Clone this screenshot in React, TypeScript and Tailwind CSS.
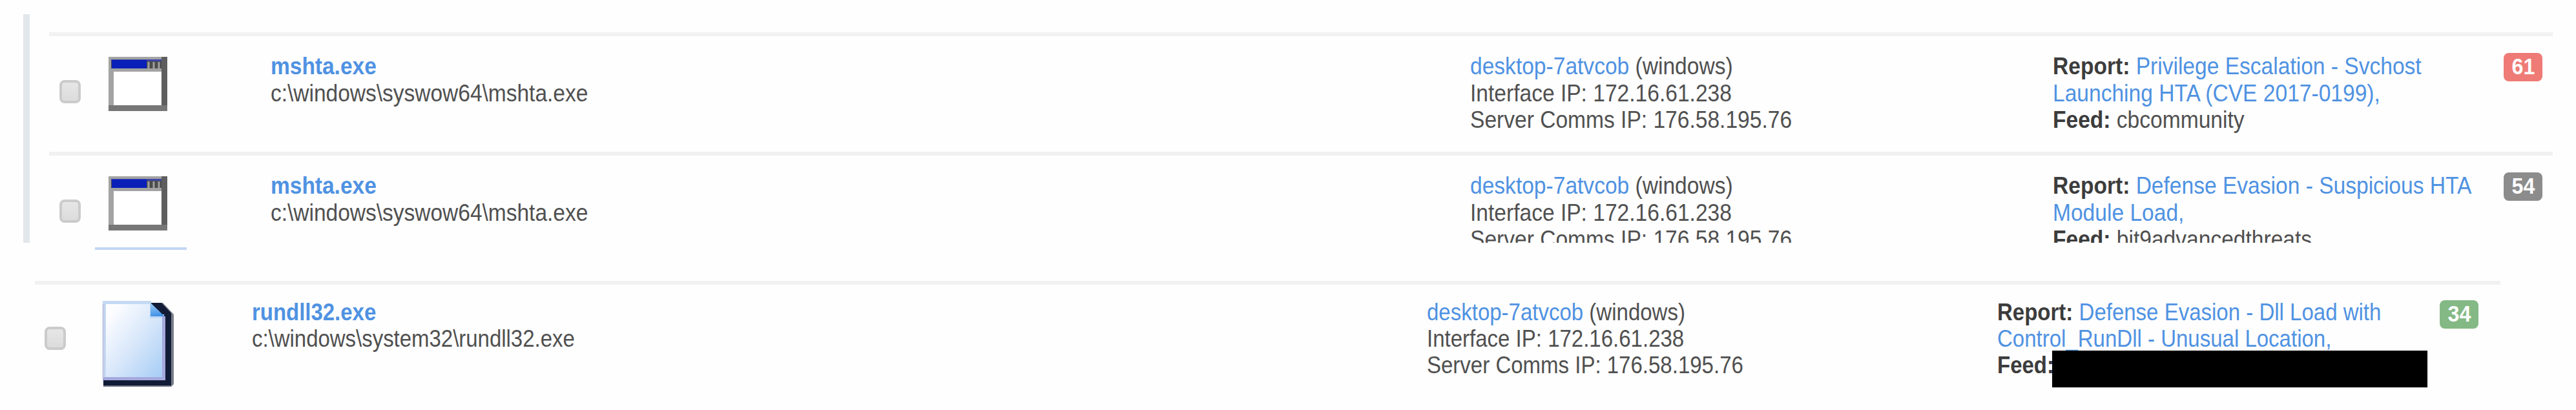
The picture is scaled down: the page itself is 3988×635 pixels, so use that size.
import type { ReactNode } from "react";

type Hit = {
  name: string;
  path: string;
  report: string[];
  feed: string;
  score: number;
};

const HITS: Hit[] = [
  {
    name: "mshta.exe",
    path: "c:\\windows\\syswow64\\mshta.exe",
    report: ["Privilege Escalation - Svchost", "Launching HTA (CVE 2017-0199),"],
    feed: "cbcommunity",
    score: 61,
  },
  {
    name: "mshta.exe",
    path: "c:\\windows\\syswow64\\mshta.exe",
    report: ["Defense Evasion - Suspicious HTA", "Module Load,"],
    feed: "bit9advancedthreats",
    score: 54,
  },
];

function scoreColor(score: number) {
  if (score > 60) return "bg-[#ee7b76]";
  if (score > 50) return "bg-[#8c8c8c]";
  return "bg-[#84b985]";
}

function Checkbox() {
  return (
    <span
      role="checkbox"
      aria-checked="false"
      className="block h-9 w-[33px] rounded-[8px] border-4 border-[#cbcbcb] bg-linear-to-b from-[#e6e6e6] to-[#dcdcdc]"
    />
  );
}

function WindowIcon() {
  return (
    <svg width="91" height="84" viewBox="0 0 91 84" aria-hidden="true">
      <rect width="91" height="84" fill="#a3a3a3" />
      <rect x="4" y="5" width="82" height="13" fill="#4b4b4b" />
      <rect x="4" y="4" width="82" height="3" fill="#3d45a8" />
      <rect x="5" y="5" width="54" height="13" fill="#0a1fb8" />
      <path d="M62 8v10M70 8v10M78 8v10" stroke="#a0a0a0" strokeWidth="3" />
      <rect x="82" y="0" width="9" height="84" fill="#5e5e5e" />
      <rect y="75" width="91" height="9" fill="#777" />
      <rect x="8" y="23" width="74" height="52" fill="#fff" />
    </svg>
  );
}

function FileIcon() {
  return (
    <svg width="112" height="136" viewBox="0 0 112 136" aria-hidden="true">
      <defs>
        <linearGradient id="page" x1="0" y1="0" x2="1" y2="1">
          <stop offset="0.1" stopColor="#fdfdff" />
          <stop offset="0.55" stopColor="#d6e6fa" />
          <stop offset="1" stopColor="#a6cdf5" />
        </linearGradient>
        <linearGradient id="fold" x1="0.3" y1="0" x2="0.5" y2="1">
          <stop offset="0" stopColor="#9dcbf5" />
          <stop offset="1" stopColor="#3d90e6" />
        </linearGradient>
      </defs>
      <path d="M2 124V134H107L111 130V22L94 4H78V20H98V124Z" fill="#777d89" />
      <path d="M2 123V132H107V20L92 4H76V22H96V123Z" fill="#121c36" />
      <path d="M1 1H76V25H97V123H1Z" fill="#c4d9f3" />
      <path d="M93 25H98V124H1V119H93Z" fill="#a5a9dc" />
      <path d="M6 6H74V28H93V119H6Z" fill="url(#page)" />
      <path d="M75 4L97 25H75Z" fill="url(#fold)" />
      <path d="M2 6V120" stroke="#c2c9e4" strokeWidth="3" />
    </svg>
  );
}

function Badge({ score }: { score: number }) {
  return (
    <span
      className={`flex h-[44px] w-[60px] items-center justify-center rounded-[8px] pb-1 text-[35px] leading-none font-bold text-white ${scoreColor(score)}`}
    >
      <span className="origin-center scale-x-[0.92]">{score}</span>
    </span>
  );
}

function Link({ children }: { children: ReactNode }) {
  return <span className="text-[#4f92e2]">{children}</span>;
}

function Process({ name, path }: { name: string; path: string }) {
  return (
    <div className="origin-left scale-x-[0.905] whitespace-nowrap">
      <div className="font-bold">
        <Link>{name}</Link>
      </div>
      <div>{path}</div>
    </div>
  );
}

function Host() {
  return (
    <div className="origin-left scale-x-[0.907] whitespace-nowrap">
      <div>
        <Link>desktop-7atvcob</Link> (windows)
      </div>
      <div>Interface IP: 172.16.61.238</div>
      <div>Server Comms IP: 176.58.195.76</div>
    </div>
  );
}

function Report({ lines, feed }: { lines: string[]; feed: string }) {
  return (
    <div className="origin-left scale-x-[0.907] whitespace-nowrap">
      <div>
        <b className="text-[#3c3c3c]">Report:</b> <Link>{lines[0]}</Link>
      </div>
      <div>
        <Link>{lines[1]}</Link>
      </div>
      <div>
        <b className="text-[#3c3c3c]">Feed:</b> {feed}
      </div>
    </div>
  );
}

export default function App() {
  return (
    <main className="h-[635px] w-[3988px] overflow-hidden bg-[#fefefe] pt-[22px] font-['Liberation_Sans',Arial,sans-serif] text-[#505050]">
      <section className="ml-9 h-[354px] w-[3916px] overflow-hidden border-l-10 border-[#e2e7ec] pt-7 pl-[30px]">
        {HITS.map((hit) => (
          <div
            key={hit.score}
            className="grid h-[185px] grid-cols-[76px_251px_1857px_902px_698px_60px] items-start border-t-6 border-[#f1f1f1] pt-[26px] pl-4 text-[37px] leading-[41.7px]"
          >
            <div className="pt-[42px]">
              <Checkbox />
            </div>
            <div className="pt-[6px]">
              <WindowIcon />
            </div>
            <Process name={hit.name} path={hit.path} />
            <Host />
            <Report lines={hit.report} feed={hit.feed} />
            <Badge score={hit.score} />
          </div>
        ))}
      </section>

      <div className="mt-[7px] ml-[147px] h-1 w-[142px] bg-[#c3d5f5]" />

      <section className="mt-12 ml-[54px] w-[3817px]">
        <div className="grid grid-cols-[89px_232px_1819px_883px_685px_60px] items-start border-t-6 border-[#f1f1f1] pt-[22px] pl-[15px] text-[36.4px] leading-[41.2px]">
          <div className="pt-[43px]">
            <Checkbox />
          </div>
          <div className="pt-[2px]">
            <FileIcon />
          </div>
          <Process name="rundll32.exe" path="c:\windows\system32\rundll32.exe" />
          <Host />
          <div className="relative">
            <Report lines={["Defense Evasion - Dll Load with", "Control_RunDll - Unusual Location,"]} feed="" />
            {/* feed name is redacted */}
            <div className="absolute top-[80px] left-[85px] h-[57px] w-[581px] bg-black" />
          </div>
          <div className="pt-[2px]">
            <Badge score={34} />
          </div>
        </div>
      </section>
    </main>
  );
}
